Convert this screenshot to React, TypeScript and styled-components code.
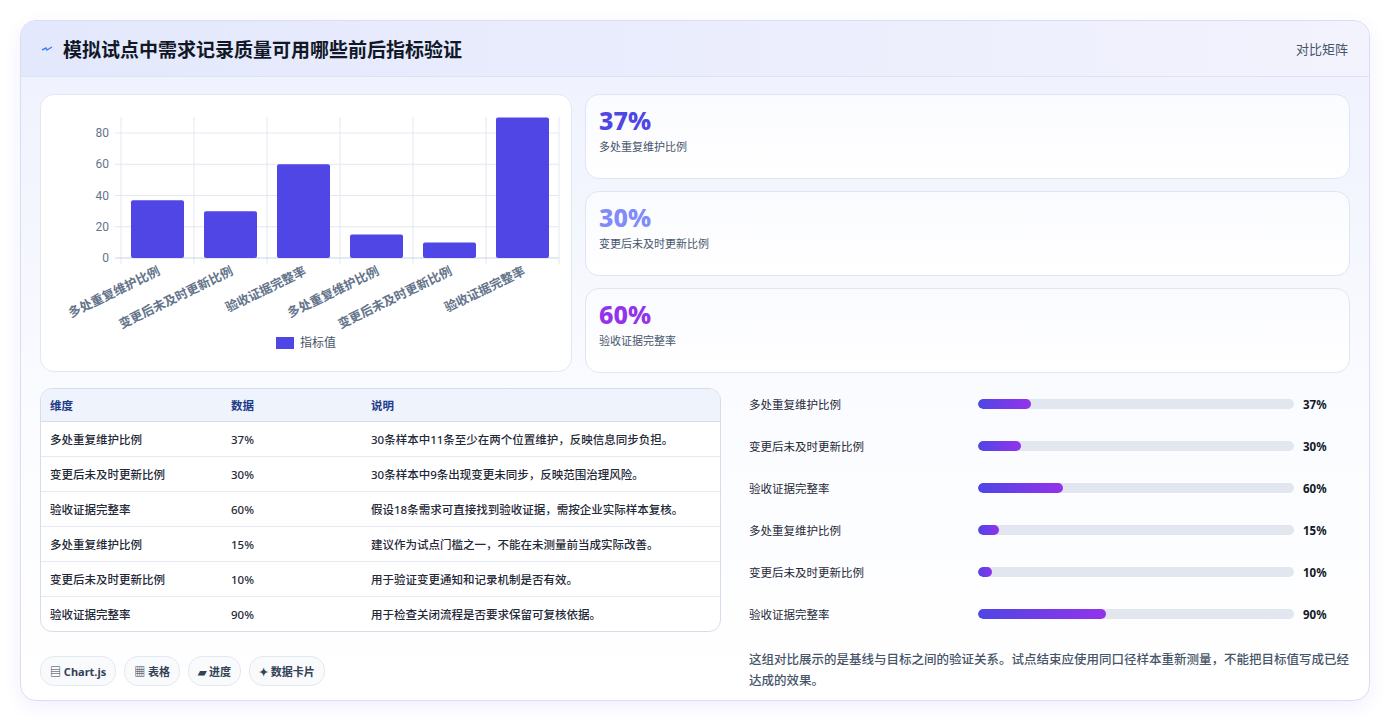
import React from 'react';
import styled, { createGlobalStyle } from 'styled-components';

const GlobalStyle = createGlobalStyle`
  body {
    margin: 0;
    background: #ffffff;
    font-family: "Noto Sans", "Noto Sans CJK SC", sans-serif;
  }
`;

const Page = styled.div`
  padding: 20px 20px 20px 20px;
  width: 1390px;
  height: 721px;
  box-sizing: border-box;
`;

const Card = styled.div`
  width: 1350px;
  height: 681px;
  box-sizing: border-box;
  border: 1px solid #d9ddf5;
  border-radius: 16px;
  background: linear-gradient(180deg, #eef1fd 0%, #fbfcff 60%, #ffffff 100%);
  box-shadow: 0 6px 18px rgba(79, 70, 229, 0.08);
  overflow: hidden;
`;

const Header = styled.div`
  height: 55px;
  display: flex;
  align-items: center;
  justify-content: space-between;
  padding: 0 21px 0 20px;
  background: linear-gradient(90deg, #e3e8fc 0%, #eceefd 60%, #f3f3fd 100%);
  border-bottom: 1px solid #dde3f5;
`;

const Title = styled.h1`
  margin: 0;
  display: flex;
  align-items: center;
  gap: 10px;
  font-size: 19px;
  font-weight: 700;
  color: #111827;
`;

const HeaderTag = styled.span`
  font-size: 13px;
  color: #475569;
`;

const Body = styled.div`
  padding: 17px 19px 0 19px;
  display: flex;
  flex-direction: column;
  gap: 15px;
`;

const TopGrid = styled.div`
  display: grid;
  grid-template-columns: 532px 1fr;
  gap: 13px;
`;

const ChartCard = styled.div`
  height: 278px;
  border: 1px solid #e2e8f0;
  border-radius: 14px;
  background: #ffffff;
  box-sizing: border-box;
`;

const StatList = styled.div`
  display: flex;
  flex-direction: column;
  gap: 12px;
`;

const StatCard = styled.div`
  height: 85px;
  box-sizing: border-box;
  padding: 11px 13px;
  border: 1px solid #dfe5f3;
  border-radius: 14px;
  background: linear-gradient(180deg, #fafbff, #ffffff);
`;

const StatValue = styled.div<{ $color: string }>`
  font-size: 25px;
  font-weight: 800;
  line-height: 28px;
  color: ${(p) => p.$color};
`;

const StatLabel = styled.div`
  margin-top: 4px;
  font-size: 11px;
  color: #475569;
`;

const BottomGrid = styled.div`
  display: grid;
  grid-template-columns: 681px 1fr;
  gap: 14px;
`;

const LeftCol = styled.div`
  display: flex;
  flex-direction: column;
  gap: 24px;
`;

const Table = styled.table`
  width: 100%;
  border-collapse: separate;
  border-spacing: 0;
  border: 1px solid #d5dceb;
  border-radius: 12px;
  overflow: hidden;
  font-size: 11.5px;
  background: #ffffff;
`;

const Th = styled.th<{ $w?: number }>`
  text-align: left;
  font-weight: 700;
  color: #1e3a8a;
  background: #eef3fc;
  height: 32px;
  padding: 0 9px;
  width: ${(p) => (p.$w ? `${p.$w}px` : 'auto')};
  border-bottom: 1px solid #d5dceb;
`;

const Td = styled.td<{ $last?: boolean }>`
  height: 34px;
  padding: 0 9px;
  color: #1f2937;
  font-weight: 500;
  border-bottom: ${(p) => (p.$last ? 'none' : '1px solid #e5e9f2')};
`;

const Chips = styled.div`
  display: flex;
  gap: 8px;
`;

const Chip = styled.span`
  height: 28px;
  padding: 0 9px;
  display: inline-flex;
  align-items: center;
  gap: 4px;
  border: 1px solid #e2e8f0;
  border-radius: 14px;
  background: #f8fafc;
  font-size: 11px;
  font-weight: 700;
  color: #334155;
`;

const RightCol = styled.div`
  display: flex;
  flex-direction: column;
  padding-left: 14px;
`;

const ProgressRow = styled.div`
  height: 42px;
  display: grid;
  grid-template-columns: 229px 316px 1fr;
  align-items: center;
  gap: 0;
  font-size: 11.5px;
  color: #1f2937;
  &:first-child { margin-top: -5px; }
`;

const Track = styled.div`
  height: 10px;
  border-radius: 5px;
  background: #e2e6ee;
  overflow: hidden;
`;

const Fill = styled.div`
  height: 100%;
  border-radius: 5px;
  background: linear-gradient(90deg, #4f46e5, #9333ea);
`;

const Pct = styled.span`
  padding-left: 9px;
  font-weight: 700;
  color: #111827;
`;

const Note = styled.p`
  margin: 14px 0 0 0;
  font-size: 12.5px;
  line-height: 21px;
  color: #475569;
  font-weight: 500;
`;

const rows = [
  { name: '多处重复维护比例', v: 37, note: '30条样本中11条至少在两个位置维护，反映信息同步负担。' },
  { name: '变更后未及时更新比例', v: 30, note: '30条样本中9条出现变更未同步，反映范围治理风险。' },
  { name: '验收证据完整率', v: 60, note: '假设18条需求可直接找到验收证据，需按企业实际样本复核。' },
  { name: '多处重复维护比例', v: 15, note: '建议作为试点门槛之一，不能在未测量前当成实际改善。' },
  { name: '变更后未及时更新比例', v: 10, note: '用于验证变更通知和记录机制是否有效。' },
  { name: '验收证据完整率', v: 90, note: '用于检查关闭流程是否要求保留可复核依据。' },
];

const BarChart = () => {
  const left = 80;
  const zero = 163;
  const scale = 1.5625;
  const step = 73;
  const ticks = [0, 20, 40, 60, 80];
  return (
    <svg width="530" height="276" style={{ display: 'block' }}>
      {Array.from({ length: 7 }).map((_, i) => (
        <line key={i} x1={left + i * step} x2={left + i * step} y1={22} y2={zero + 6} stroke="#e2e8f0" />
      ))}
      {ticks.map((t) => (
        <g key={t}>
          <line x1={left - 6} x2={left + 6 * step} y1={zero - t * scale} y2={zero - t * scale} stroke={t === 0 ? '#cbd5e1' : '#e2e8f0'} />
          <text x={left - 12} y={zero - t * scale + 4} fontSize="12" fill="#64748b" textAnchor="end" fontFamily="Roboto, sans-serif">{t}</text>
        </g>
      ))}
      {rows.map((r, i) => {
        const h = r.v * scale;
        const x = left + i * step + 10;
        return (
          <g key={i}>
            <rect x={x} y={zero - h} width={53} height={h} rx={2} fill="#4f46e5" />
            <text
              transform={`translate(${left + i * step + 40},${zero + 16}) rotate(-26)`}
              fontSize="12.5"
              fontWeight="600"
              fill="#64748b"
              textAnchor="end"
            >
              {r.name}
            </text>
          </g>
        );
      })}
      <rect x={235} y={242} width={18} height={12} fill="#4f46e5" />
      <text x={259} y={252} fontSize="12" fill="#475569">指标值</text>
    </svg>
  );
};

const stats = [
  { v: '37%', label: '多处重复维护比例', color: '#4f46e5' },
  { v: '30%', label: '变更后未及时更新比例', color: '#818cf8' },
  { v: '60%', label: '验收证据完整率', color: '#9333ea' },
];

export default function App() {
  return (
    <>
      <GlobalStyle />
      <Page>
        <Card>
          <Header>
            <Title>
              <svg width="12" height="10" viewBox="0 0 12 10">
                <path d="M1 6 L5 4 L6 6 L11 3" stroke="#3b82f6" strokeWidth="1.4" fill="none" />
              </svg>
              模拟试点中需求记录质量可用哪些前后指标验证
            </Title>
            <HeaderTag>对比矩阵</HeaderTag>
          </Header>
          <Body>
            <TopGrid>
              <ChartCard>
                <BarChart />
              </ChartCard>
              <StatList>
                {stats.map((s) => (
                  <StatCard key={s.v}>
                    <StatValue $color={s.color}>{s.v}</StatValue>
                    <StatLabel>{s.label}</StatLabel>
                  </StatCard>
                ))}
              </StatList>
            </TopGrid>
            <BottomGrid>
              <LeftCol>
                <Table>
                  <thead>
                    <tr>
                      <Th $w={163}>维度</Th>
                      <Th $w={122}>数据</Th>
                      <Th>说明</Th>
                    </tr>
                  </thead>
                  <tbody>
                    {rows.map((r, i) => (
                      <tr key={i}>
                        <Td $last={i === rows.length - 1}>{r.name}</Td>
                        <Td $last={i === rows.length - 1}>{r.v}%</Td>
                        <Td $last={i === rows.length - 1}>{r.note}</Td>
                      </tr>
                    ))}
                  </tbody>
                </Table>
                <Chips>
                  <Chip>▤ Chart.js</Chip>
                  <Chip>▦ 表格</Chip>
                  <Chip>▰ 进度</Chip>
                  <Chip>✦ 数据卡片</Chip>
                </Chips>
              </LeftCol>
              <RightCol>
                {rows.map((r, i) => (
                  <ProgressRow key={i}>
                    <span>{r.name}</span>
                    <Track>
                      <Fill style={{ width: `${r.v * 0.45}%` }} />
                    </Track>
                    <Pct>{r.v}%</Pct>
                  </ProgressRow>
                ))}
                <Note>这组对比展示的是基线与目标之间的验证关系。试点结束应使用同口径样本重新测量，不能把目标值写成已经达成的效果。</Note>
              </RightCol>
            </BottomGrid>
          </Body>
        </Card>
      </Page>
    </>
  );
}
